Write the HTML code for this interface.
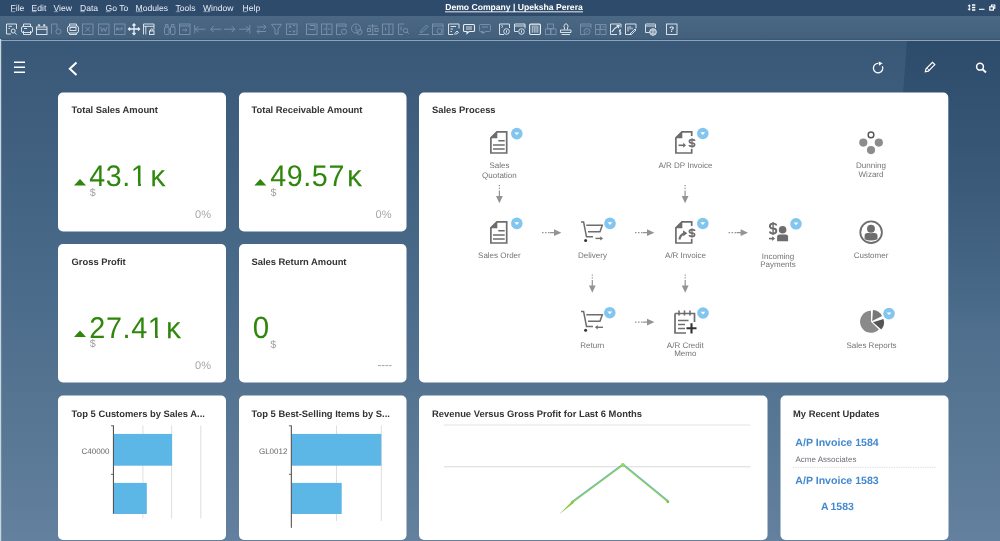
<!DOCTYPE html>
<html><head><meta charset="utf-8"><title>Cockpit</title>
<style>
*{margin:0;padding:0}
html,body{width:1000px;height:541px;overflow:hidden;background:#3a5979}
svg{display:block;font-family:"Liberation Sans", sans-serif;will-change:transform;text-rendering:geometricPrecision}
</style></head><body>
<svg width="1000" height="541" viewBox="0 0 1000 541">
<defs>
<linearGradient id="bg" x1="0" y1="0" x2="0" y2="1">
<stop offset="0" stop-color="#395878"/><stop offset="0.5" stop-color="#4b6b8a"/><stop offset="1" stop-color="#63819e"/>
</linearGradient>
<linearGradient id="facet" x1="0" y1="0" x2="0" y2="1">
<stop offset="0" stop-color="#1f3b5c" stop-opacity="0.45"/><stop offset="1" stop-color="#1f3b5c" stop-opacity="0"/>
</linearGradient>
</defs>

<rect x="0" y="0" width="1000" height="16" fill="#2e4b6b"/>
<text x="10.5" y="10.8" font-size="8.6" fill="#e6ecf2" font-weight="normal" text-anchor="start" >File</text>
<rect x="10.8" y="11.5" width="4.5" height="0.6" fill="#c9d3dd"/>
<text x="31.5" y="10.8" font-size="8.6" fill="#e6ecf2" font-weight="normal" text-anchor="start" >Edit</text>
<rect x="31.8" y="11.5" width="4.5" height="0.6" fill="#c9d3dd"/>
<text x="53.5" y="10.8" font-size="8.6" fill="#e6ecf2" font-weight="normal" text-anchor="start" >View</text>
<rect x="53.8" y="11.5" width="4.5" height="0.6" fill="#c9d3dd"/>
<text x="80" y="10.8" font-size="8.6" fill="#e6ecf2" font-weight="normal" text-anchor="start" >Data</text>
<rect x="80.3" y="11.5" width="4.5" height="0.6" fill="#c9d3dd"/>
<text x="105.5" y="10.8" font-size="8.6" fill="#e6ecf2" font-weight="normal" text-anchor="start" >Go To</text>
<rect x="105.8" y="11.5" width="4.5" height="0.6" fill="#c9d3dd"/>
<text x="135.5" y="10.8" font-size="8.6" fill="#e6ecf2" font-weight="normal" text-anchor="start" >Modules</text>
<rect x="135.8" y="11.5" width="7" height="0.6" fill="#c9d3dd"/>
<text x="175.5" y="10.8" font-size="8.6" fill="#e6ecf2" font-weight="normal" text-anchor="start" >Tools</text>
<rect x="175.8" y="11.5" width="4.5" height="0.6" fill="#c9d3dd"/>
<text x="203" y="10.8" font-size="8.6" fill="#e6ecf2" font-weight="normal" text-anchor="start" >Window</text>
<rect x="203.3" y="11.5" width="7" height="0.6" fill="#c9d3dd"/>
<text x="242.5" y="10.8" font-size="8.6" fill="#e6ecf2" font-weight="normal" text-anchor="start" >Help</text>
<rect x="242.8" y="11.5" width="4.5" height="0.6" fill="#c9d3dd"/>
<text x="514" y="10.2" font-size="8.6" fill="#ffffff" font-weight="bold" text-anchor="middle" >Demo Company | Upeksha Perera</text>
<rect x="445" y="11.4" width="138" height="0.9" fill="#ffffff"/>
<g fill="none" stroke="#ffffff" stroke-width="1"><path d="M969.3 5V10" stroke-width="0.9"/><path d="M967.6 6.2L969.3 4.2L971 6.2ZM967.6 8.8L969.3 10.8L971 8.8Z" fill="#fff" stroke="none"/><path d="M972 5H975.3M972 7.5H975.3M972 10H975.3" stroke-width="1.3"/><path d="M979 9.3H984.5" stroke-width="1.1"/><rect x="989.8" y="6.8" width="3.6" height="3.3" stroke-width="1.2"/><path d="M991.5 6.5V5H994.8V8.3H993.5" stroke-width="1.1"/></g>
<defs><linearGradient id="tbg" x1="0" y1="0" x2="0" y2="1"><stop offset="0" stop-color="#4a6784"/><stop offset="1" stop-color="#42607c"/></linearGradient></defs><rect x="0" y="16" width="1000" height="24" fill="url(#tbg)"/><rect x="0" y="38.8" width="1000" height="1.2" fill="#3b5773"/>
<g transform="translate(6,23.5)" fill="none" stroke="#e9eef3" stroke-width="0.9"><path d="M0.5 10.5V0.5H10.5V5.5M0.5 10.5H5"/><path d="M2.5 2.8H6M2.5 5H4"/><circle cx="7.2" cy="7.5" r="2"/><path d="M8.6 9L10.6 11"/></g>
<g transform="translate(21,23.5)" fill="none" stroke="#e9eef3" stroke-width="0.9"><rect x="0.5" y="3" width="11" height="6" rx="1.5"/><path d="M2.5 3V0.5H9.5V3M2.5 7.5V11H9.5V7.5"/><path d="M3 5H6"/></g>
<g transform="translate(36,23.5)" fill="none" stroke="#e9eef3" stroke-width="0.9"><rect x="0.5" y="3.5" width="10.5" height="7.5"/><path d="M0.5 5.8H11"/><path d="M3 0.5V3M1.8 1.7H4.2M8.2 0.5V3M7 1.7H9.5"/></g>
<g transform="translate(51,23.5)" fill="none" stroke="#7c93aa" stroke-width="0.9"><path d="M0.5 10.5V0.5H6V5"/><circle cx="7.5" cy="8" r="2.6"/></g>
<g transform="translate(67,23.5)" fill="none" stroke="#e9eef3" stroke-width="0.9"><rect x="0.5" y="2.5" width="11" height="7" rx="2"/><path d="M2.5 2.5V0.5H9.5V2.5M2.5 9.5V11H9.5V9.5"/><rect x="3" y="4" width="6" height="3"/></g>
<g transform="translate(82,23.5)" fill="none" stroke="#7c93aa" stroke-width="0.9"><rect x="0.5" y="0.5" width="10.5" height="10.5"/><path d="M3.5 3.5L8 8M8 3.5L3.5 8"/></g>
<g transform="translate(98,23.5)" fill="none" stroke="#7c93aa" stroke-width="0.9"><rect x="0.5" y="0.5" width="10.5" height="10.5"/><path d="M2.5 3.5L4 8L5.7 4.5L7.4 8L9 3.5"/></g>
<g transform="translate(114,23.5)" fill="none" stroke="#7c93aa" stroke-width="0.9"><rect x="0.5" y="0.5" width="10.5" height="10.5"/><path d="M2.5 7V4.5H4V6H2.5M5 4.5V7M7 4.5V7M7 4.5H9M7 5.7H8.5"/></g>
<g transform="translate(128,23.5)" fill="none" stroke="#e9eef3" stroke-width="0.9"><path d="M6 0.5V11M0.5 5.5H11.5M4.5 2L6 0.5L7.5 2M4.5 9.5L6 11L7.5 9.5M2 4L0.5 5.5L2 7M10 4L11.5 5.5L10 7" stroke-width="1.3"/></g>
<g transform="translate(143,23.5)" fill="none" stroke="#e9eef3" stroke-width="0.9"><path d="M0.5 11V0.5H11V6"/><path d="M0.5 2.8H11M2.8 2.8V11"/><rect x="6.5" y="7.5" width="4.5" height="3.5"/><path d="M7.5 7.5V6.5A1.2 1.2 0 0 1 10 6.5V7.5"/></g>
<g transform="translate(164,23.5)" fill="none" stroke="#7c93aa" stroke-width="0.9"><rect x="0.5" y="3.5" width="4.5" height="7.5" rx="1"/><rect x="6.5" y="3.5" width="4.5" height="7.5" rx="1"/><path d="M1.5 3.5V1H4V3.5M7.5 3.5V1H10V3.5M5 6H6.5"/></g>
<g transform="translate(179,23.5)" fill="none" stroke="#7c93aa" stroke-width="0.9"><rect x="0.5" y="0.5" width="10.5" height="10.5"/><path d="M0.5 2.5H11M3 6.5H8M6.5 5L8 6.5L6.5 8"/></g>
<g transform="translate(194,23.5)" fill="none" stroke="#7c93aa" stroke-width="0.9"><path d="M0.7 1.5V10M1.5 5.7H11.5M4.5 2.7L1.5 5.7L4.5 8.7"/></g>
<g transform="translate(210,23.5)" fill="none" stroke="#7c93aa" stroke-width="0.9"><path d="M0.7 5.7H11.5M3.7 2.7L0.7 5.7L3.7 8.7"/></g>
<g transform="translate(224,23.5)" fill="none" stroke="#7c93aa" stroke-width="0.9"><path d="M0 5.7H10.8M7.8 2.7L10.8 5.7L7.8 8.7"/></g>
<g transform="translate(239,23.5)" fill="none" stroke="#7c93aa" stroke-width="0.9"><path d="M10.8 1.5V10M0 5.7H10M7 2.7L10 5.7L7 8.7"/></g>
<g transform="translate(256,23.5)" fill="none" stroke="#7c93aa" stroke-width="0.9"><path d="M1 3.5H10M7.5 1L10 3.5L7.5 6M10 8H1M3.5 5.5L1 8L3.5 10.5"/></g>
<g transform="translate(271,23.5)" fill="none" stroke="#7c93aa" stroke-width="0.9"><path d="M0.5 0.8H10.5L7 5.5V10.5H4V5.5Z"/></g>
<g transform="translate(286,23.5)" fill="none" stroke="#7c93aa" stroke-width="0.9"><rect x="0.5" y="0.5" width="10.5" height="10.5"/><path d="M3 4.5L4 2L5 4.5M7 2H9M3 8H5M7 7L8 9L9 7"/></g>
<g transform="translate(306,23.5)" fill="none" stroke="#7c93aa" stroke-width="0.9"><rect x="0.5" y="0.5" width="10.5" height="10.5"/><path d="M0.5 0.5V11M4 2H9V6H4M2 5.5H4"/></g>
<g transform="translate(321,23.5)" fill="none" stroke="#7c93aa" stroke-width="0.9"><rect x="0.5" y="0.5" width="10.5" height="10.5"/><path d="M5.7 0.5V11M2.5 5.5H5M7 5.5H9.5"/></g>
<g transform="translate(336,23.5)" fill="none" stroke="#7c93aa" stroke-width="0.9"><path d="M0.5 11V0.5H10V4M0.5 2.5H10M0.5 11H5"/><circle cx="8" cy="8.2" r="2.6"/></g>
<g transform="translate(351,23.5)" fill="none" stroke="#7c93aa" stroke-width="0.9"><circle cx="5" cy="5" r="4.5"/><circle cx="8.5" cy="8.5" r="2.5"/><path d="M5 2.5V7.5"/></g>
<g transform="translate(367,23.5)" fill="none" stroke="#7c93aa" stroke-width="0.9"><path d="M5.7 0.5V11M0.5 11H11M1 2.5H10.5"/><rect x="0.5" y="5" width="3" height="3"/><rect x="8" y="5" width="3" height="3"/></g>
<g transform="translate(382,23.5)" fill="none" stroke="#7c93aa" stroke-width="0.9"><rect x="0.5" y="0.5" width="10.5" height="10.5"/><path d="M7 0.5V11M3.5 4V7"/></g>
<g transform="translate(398,23.5)" fill="none" stroke="#7c93aa" stroke-width="0.9"><path d="M0.5 11V0.5H6M0.5 11H5"/><path d="M3 3V7"/><circle cx="7.5" cy="7" r="2.2"/><path d="M9 8.5L11 10.5"/></g>
<g transform="translate(418,23.5)" fill="none" stroke="#7c93aa" stroke-width="0.9"><path d="M0.5 11H11M2.5 9L3 7L8.5 1.5L10 3L4.5 8.5Z"/></g>
<g transform="translate(432,23.5)" fill="none" stroke="#7c93aa" stroke-width="0.9"><rect x="0.5" y="0.5" width="10.5" height="10.5"/><path d="M0.5 2.5H11"/><circle cx="7.5" cy="7.5" r="2.5"/></g>
<g transform="translate(448,23.5)" fill="none" stroke="#e9eef3" stroke-width="0.9"><path d="M0.5 11V0.5H11V5M0.5 11H5"/><path d="M2.5 3H8M2.5 5.5H5M2.5 8H4"/><path d="M6 11L9 7.5L10.5 9L7.5 11"/></g>
<g transform="translate(463,23.5)" fill="none" stroke="#e9eef3" stroke-width="0.9"><path d="M1.5 1H10.5Q11.5 1 11.5 2V7Q11.5 8 10.5 8H6L4 10V8H1.5Q0.5 8 0.5 7V2Q0.5 1 1.5 1Z" stroke-width="1.1"/><path d="M3 3.5H9M3 5.5H9"/></g>
<g transform="translate(479,23.5)" fill="none" stroke="#7c93aa" stroke-width="0.9"><path d="M1.5 1H10.5Q11.5 1 11.5 2V7Q11.5 8 10.5 8H6L4 10V8H1.5Q0.5 8 0.5 7V2Q0.5 1 1.5 1Z"/><path d="M3 3.5H9M2 9H6"/></g>
<g transform="translate(499,23.5)" fill="none" stroke="#e9eef3" stroke-width="0.9"><path d="M0.5 11V0.5H10.5V4.5M0.5 11H5"/><path d="M2.5 2.5L3.5 1.5M2.5 4L4 3"/><circle cx="7.5" cy="8" r="2.8"/><path d="M7.5 6.8V9.2"/></g>
<g transform="translate(514,23.5)" fill="none" stroke="#e9eef3" stroke-width="0.9"><path d="M0.5 8V0.5H11V5M0.5 8H4M0.5 2.5H11"/><circle cx="7.5" cy="8" r="2.8"/><path d="M7.5 6.8V9.2"/></g>
<g transform="translate(529,23.5)" fill="none" stroke="#e9eef3" stroke-width="0.9"><rect x="0.6" y="0.6" width="10.8" height="10.4" rx="1.2" stroke-width="1.2"/><path d="M2.5 2.6H9.5M3.3 3.5V9.3M5.2 3.5V9.3M7 3.5V9.3M8.8 3.5V9.3" stroke-width="0.8"/></g>
<g transform="translate(545,23.5)" fill="none" stroke="#7c93aa" stroke-width="0.9"><rect x="2.5" y="0.5" width="6" height="4.5"/><rect x="0.5" y="5.5" width="5" height="5.5"/><rect x="6" y="5.5" width="5" height="5.5"/></g>
<g transform="translate(560,23.5)" fill="none" stroke="#e9eef3" stroke-width="0.9"><path d="M4.5 6V4.5A2 2.5 0 1 1 7.5 4.5V6M0.5 6.5H11V9H0.5ZM1.5 11H10"/></g>
<g transform="translate(580,23.5)" fill="none" stroke="#7c93aa" stroke-width="0.9"><path d="M0.5 11V0.5H11V5M0.5 2.5H11M0.5 11H5"/><circle cx="7" cy="8" r="3"/><path d="M6 9L8 7"/></g>
<g transform="translate(595,23.5)" fill="none" stroke="#7c93aa" stroke-width="0.9"><path d="M0.5 11V1H5V11H0.5M0.5 6H11V11H5.7M5.7 6V1H11V6M7.5 3.5H10"/></g>
<g transform="translate(610,23.5)" fill="none" stroke="#e9eef3" stroke-width="0.9"><path d="M11 4V0.5H0.5V11H7"/><path d="M2 8.5Q4 4.5 8.5 2.5" stroke-width="1.3"/><path d="M6.5 1.8L9.2 2.2L8.3 4.6" stroke-width="1.1"/><path d="M11 6.5Q9.2 6.2 9.2 7.5Q9.2 8.3 10.2 8.6Q11.3 9 11 10.2Q10.6 11 9.2 10.6M10.1 5.8V11.5" stroke-width="0.9"/></g>
<g transform="translate(625,23.5)" fill="none" stroke="#e9eef3" stroke-width="0.9"><path d="M0.5 11V0.5H11V5M0.5 11H6"/><path d="M3 3V8M5 2.5V6M7 4V6"/><path d="M5 10.5L10 5.5L11 6.5L6.2 11.2Z"/></g>
<g transform="translate(645,23.5)" fill="none" stroke="#e9eef3" stroke-width="0.9"><path d="M0.5 9V1Q0.5 0.5 1 0.5H10Q10.5 0.5 10.5 1V4.5M0.5 9H4.5M0.5 2.5H10.5"/><circle cx="8" cy="8.5" r="3.3" fill="#47627f" stroke-width="1"/><path d="M4.7 8.5H11.3M8 5.2V11.8M5.5 6.8H10.5M5.5 10.2H10.5" stroke-width="0.7"/></g>
<g transform="translate(666,23.5)" fill="none" stroke="#e9eef3" stroke-width="0.9"><rect x="0.5" y="0.5" width="10.5" height="10.5"/><text x="5.75" y="8.6" text-anchor="middle" font-family='"Liberation Sans", sans-serif' font-size="8" font-weight="bold" fill="#e9eef3" stroke="none">?</text></g>
<rect x="0" y="40" width="1000" height="1" fill="#8da4b9"/>
<rect x="0" y="41" width="1000" height="500" fill="url(#bg)"/>
<polygon points="907,41 1000,41 1000,330 885,330" fill="url(#facet)"/>
<rect x="0" y="39" width="1.2" height="502" fill="#c8d4de"/>
<g stroke="#ffffff" fill="none" stroke-width="1.6"><path d="M14 62.2H25M14 67.2H25M14 72.2H25"/></g>
<path d="M76.5 62.5L69.8 68.8L76.5 75" stroke="#ffffff" stroke-width="2" fill="none"/>
<path d="M878.3 63.4A4.7 4.7 0 1 0 882.4 66.2" stroke="#ffffff" stroke-width="1.3" fill="none"/><path d="M878.6 61.4L882.6 63.2L879 65.8Z" fill="#ffffff"/>
<path d="M925.3 71.8L926 68.8L932.5 62.3L934.8 64.6L928.3 71.1Z" stroke="#ffffff" stroke-width="1.2" fill="none"/><path d="M927 68.2L929.6 70.5" stroke="#ffffff" stroke-width="0.8"/>
<circle cx="980" cy="66.7" r="3.4" stroke="#ffffff" stroke-width="1.5" fill="none"/><path d="M982.5 69.2L986 72.5" stroke="#ffffff" stroke-width="1.9"/>
<rect x="58" y="92.5" width="168" height="139" rx="5" fill="#ffffff"/>
<rect x="239" y="92.5" width="167.5" height="139" rx="5" fill="#ffffff"/>
<rect x="58" y="244" width="168" height="138.5" rx="5" fill="#ffffff"/>
<rect x="239" y="244" width="167.5" height="138.5" rx="5" fill="#ffffff"/>
<rect x="419" y="92.5" width="529.3" height="290" rx="5" fill="#ffffff"/>
<rect x="58" y="395.5" width="168" height="144.5" rx="5" fill="#ffffff"/>
<rect x="239" y="395.5" width="167.5" height="144.5" rx="5" fill="#ffffff"/>
<rect x="419" y="395.5" width="348.5" height="144.5" rx="5" fill="#ffffff"/>
<rect x="780.5" y="395.5" width="168" height="144.5" rx="5" fill="#ffffff"/>
<text x="71.5" y="113" font-size="9.4" fill="#333333" font-weight="bold" text-anchor="start" >Total Sales Amount</text>
<text x="251.5" y="113" font-size="9.4" fill="#333333" font-weight="bold" text-anchor="start" >Total Receivable Amount</text>
<text x="71.5" y="264.5" font-size="9.4" fill="#333333" font-weight="bold" text-anchor="start" >Gross Profit</text>
<text x="251.5" y="264.5" font-size="9.4" fill="#333333" font-weight="bold" text-anchor="start" >Sales Return Amount</text>
<text x="432" y="113" font-size="9.4" fill="#333333" font-weight="bold" text-anchor="start" >Sales Process</text>
<text x="71.5" y="416.5" font-size="9.4" fill="#333333" font-weight="bold" text-anchor="start" >Top 5 Customers by Sales A...</text>
<text x="251.5" y="416.5" font-size="9.4" fill="#333333" font-weight="bold" text-anchor="start" >Top 5 Best-Selling Items by S...</text>
<text x="432" y="416.5" font-size="9.4" fill="#333333" font-weight="bold" text-anchor="start" >Revenue Versus Gross Profit for Last 6 Months</text>
<text x="793" y="416.5" font-size="9.4" fill="#333333" font-weight="bold" text-anchor="start" >My Recent Updates</text>
<g transform="translate(0,185.9) scale(1,1.04) translate(0,-185.9)"><text x="89.3" y="185.9" font-size="28.6" fill="#2e870c" font-weight="normal" text-anchor="start" letter-spacing="0.6">43.1</text></g>
<g transform="translate(0,185.9) scale(1,1.04) translate(0,-185.9)"><text x="151" y="185.9" font-size="21.5" fill="#2e870c" font-weight="normal" text-anchor="start" stroke="#2e870c" stroke-width="0.5">K</text></g>
<polygon points="74,185.5 86,185.5 80,179" fill="#2e870c"/>
<text x="89.8" y="195.5" font-size="10.8" fill="#a0a0a0" font-weight="normal" text-anchor="start" >$</text>
<text x="211" y="218" font-size="11" fill="#a8a8a8" font-weight="normal" text-anchor="end" >0%</text>
<rect x="132.3" y="182.4" width="5.8" height="4" fill="#fff"/><rect x="140.9" y="182.4" width="5.5" height="4" fill="#fff"/>
<g transform="translate(0,185.9) scale(1,1.04) translate(0,-185.9)"><text x="270.2" y="185.9" font-size="28.7" fill="#2e870c" font-weight="normal" text-anchor="start" letter-spacing="0.6">49.57</text></g>
<g transform="translate(0,185.9) scale(1,1.04) translate(0,-185.9)"><text x="347.6" y="185.9" font-size="21.5" fill="#2e870c" font-weight="normal" text-anchor="start" stroke="#2e870c" stroke-width="0.5">K</text></g>
<polygon points="254.3,185.5 266.3,185.5 260.3,179" fill="#2e870c"/>
<text x="270.6" y="195.5" font-size="10.8" fill="#a0a0a0" font-weight="normal" text-anchor="start" >$</text>
<text x="391.5" y="218" font-size="11" fill="#a8a8a8" font-weight="normal" text-anchor="end" >0%</text>
<g transform="translate(0,337.7) scale(1,1.04) translate(0,-337.7)"><text x="89.3" y="337.7" font-size="28.8" fill="#2e870c" font-weight="normal" text-anchor="start" letter-spacing="0.6">27.41</text></g>
<g transform="translate(0,337.7) scale(1,1.04) translate(0,-337.7)"><text x="166.6" y="337.7" font-size="21.5" fill="#2e870c" font-weight="normal" text-anchor="start" stroke="#2e870c" stroke-width="0.5">K</text></g>
<polygon points="74,337 86,337 80,330.5" fill="#2e870c"/>
<text x="89.8" y="347" font-size="10.8" fill="#a0a0a0" font-weight="normal" text-anchor="start" >$</text>
<text x="211" y="369" font-size="11" fill="#a8a8a8" font-weight="normal" text-anchor="end" >0%</text>
<rect x="149.3" y="334.4" width="5.8" height="4" fill="#fff"/><rect x="157.9" y="334.4" width="5.5" height="4" fill="#fff"/>
<g transform="translate(0,338) scale(1,1.04) translate(0,-338)"><text x="252.8" y="338" font-size="29.5" fill="#2e870c" font-weight="normal" text-anchor="start" letter-spacing="0.6">0</text></g>
<text x="270.3" y="347.8" font-size="10.8" fill="#a0a0a0" font-weight="normal" text-anchor="start" >$</text>
<path d="M378 365.6H380.8M381.7 365.6H384.5M385.4 365.6H388.2M389.1 365.6H391.6" stroke="#999" stroke-width="0.9"/>
<g transform="translate(490,131)"><path d="M0.9 6.9L7 0.9H16.7V22H0.9Z" fill="none" stroke="#6d6d6d" stroke-width="1.7" stroke-linejoin="miter"/><path d="M0.1 7.2L7.3 0.1V7.2Z" fill="#6d6d6d"/><path d="M8.3 9.7H14.7M3 14H14.7M3 18H14.7" stroke="#6d6d6d" stroke-width="1.4"/></g>
<circle cx="516.8" cy="133.6" r="5.8" fill="#82c6f0"/><polygon points="514.4,132.4 519.1999999999999,132.4 516.8,135.1" fill="#ffffff"/>
<text x="499.4" y="168.2" font-size="8" fill="#747474" font-weight="normal" text-anchor="middle" >Sales</text>
<text x="499.4" y="177.5" font-size="8" fill="#747474" font-weight="normal" text-anchor="middle" >Quotation</text>
<g transform="translate(490,221)"><path d="M0.9 6.9L7 0.9H16.7V22H0.9Z" fill="none" stroke="#6d6d6d" stroke-width="1.7" stroke-linejoin="miter"/><path d="M0.1 7.2L7.3 0.1V7.2Z" fill="#6d6d6d"/><path d="M8.3 9.7H14.7M3 14H14.7M3 18H14.7" stroke="#6d6d6d" stroke-width="1.4"/></g>
<circle cx="516.8" cy="223.4" r="5.8" fill="#82c6f0"/><polygon points="514.4,222.20000000000002 519.1999999999999,222.20000000000002 516.8,224.9" fill="#ffffff"/>
<text x="499.4" y="257.9" font-size="8" fill="#747474" font-weight="normal" text-anchor="middle" >Sales Order</text>
<g transform="translate(581,221.4)"><path d="M0 0.6H2.6L5.5 15.4H12" fill="none" stroke="#6d6d6d" stroke-width="1.5"/><path d="M5.3 3.8H21.3L19 10.3H7" fill="none" stroke="#6d6d6d" stroke-width="1.5"/><circle cx="4.6" cy="19.2" r="1.5" fill="#333"/><path d="M14.5 17H20" stroke="#6d6d6d" stroke-width="1.4"/><path d="M19.3 14.8L22 17L19.3 19.2Z" fill="#6d6d6d"/></g>
<circle cx="610" cy="223.4" r="5.8" fill="#82c6f0"/><polygon points="607.6,222.20000000000002 612.4,222.20000000000002 610,224.9" fill="#ffffff"/>
<text x="592.5" y="257.9" font-size="8" fill="#747474" font-weight="normal" text-anchor="middle" >Delivery</text>
<g transform="translate(675,131)"><path d="M16.7 5V0.9H7L0.9 6.9V22H16.7V17.8" fill="none" stroke="#6d6d6d" stroke-width="1.7"/><path d="M0.1 7.2L7.3 0.1V7.2Z" fill="#6d6d6d"/><path d="M19.60,9.96 Q19.60,8.60 17.00,8.60 Q14.40,8.60 14.40,10.30 Q14.40,12.00 17.00,12.00 Q19.60,12.00 19.60,13.70 Q19.60,15.40 17.00,15.40 Q14.40,15.40 14.40,14.04" fill="none" stroke="#6d6d6d" stroke-width="1.7"/><path d="M17.00,7.44V16.56" stroke="#6d6d6d" stroke-width="1.27"/><path d="M3.5 14.3H9.2" stroke="#6d6d6d" stroke-width="1.6"/><path d="M8.2 11.8L11 14.3L8.2 16.8Z" fill="#6d6d6d"/></g>
<circle cx="702.8" cy="133.5" r="5.8" fill="#82c6f0"/><polygon points="700.4,132.3 705.1999999999999,132.3 702.8,135.0" fill="#ffffff"/>
<text x="685.5" y="168.2" font-size="8" fill="#747474" font-weight="normal" text-anchor="middle" >A/R DP Invoice</text>
<g transform="translate(675,221)"><path d="M16.7 5V0.9H7L0.9 6.9V22H16.7V17.8" fill="none" stroke="#6d6d6d" stroke-width="1.7"/><path d="M0.1 7.2L7.3 0.1V7.2Z" fill="#6d6d6d"/><path d="M19.60,9.96 Q19.60,8.60 17.00,8.60 Q14.40,8.60 14.40,10.30 Q14.40,12.00 17.00,12.00 Q19.60,12.00 19.60,13.70 Q19.60,15.40 17.00,15.40 Q14.40,15.40 14.40,14.04" fill="none" stroke="#6d6d6d" stroke-width="1.7"/><path d="M17.00,7.44V16.56" stroke="#6d6d6d" stroke-width="1.27"/><path d="M4.4 18.5Q5 13.8 9.3 12.4" fill="none" stroke="#6d6d6d" stroke-width="2.1"/><path d="M8 9.3L12.3 12.2L8.3 15.3Z" fill="#6d6d6d"/></g>
<circle cx="702.8" cy="223.5" r="5.8" fill="#82c6f0"/><polygon points="700.4,222.3 705.1999999999999,222.3 702.8,225.0" fill="#ffffff"/>
<text x="685.5" y="257.9" font-size="8" fill="#747474" font-weight="normal" text-anchor="middle" >A/R Invoice</text>
<path d="M776.30,225.56 Q776.30,223.60 773.10,223.60 Q769.90,223.60 769.90,226.05 Q769.90,228.50 773.10,228.50 Q776.30,228.50 776.30,230.95 Q776.30,233.40 773.10,233.40 Q769.90,233.40 769.90,231.44" fill="none" stroke="#6d6d6d" stroke-width="1.9"/><path d="M773.10,221.93V235.07" stroke="#6d6d6d" stroke-width="1.42"/>
<path d="M777.1 241.2V236.6Q777.1 234.4 779.5 234.4H785.7Q788.1 234.4 788.1 236.6V241.2Z" fill="#6d6d6d"/><circle cx="782.6" cy="229.8" r="4.3" fill="#ffffff"/><circle cx="782.6" cy="229.8" r="3.8" fill="#6d6d6d"/>
<path d="M769 238.6H773" stroke="#6d6d6d" stroke-width="1.6"/><path d="M772.2 236.2L775 238.6L772.2 241Z" fill="#6d6d6d"/>
<circle cx="796" cy="223.8" r="5.8" fill="#82c6f0"/><polygon points="793.6,222.60000000000002 798.4,222.60000000000002 796,225.3" fill="#ffffff"/>
<text x="778" y="258.5" font-size="8" fill="#747474" font-weight="normal" text-anchor="middle" >Incoming</text>
<text x="778" y="267.3" font-size="8" fill="#747474" font-weight="normal" text-anchor="middle" >Payments</text>
<circle cx="871" cy="134.9" r="2.85" fill="none" stroke="#555" stroke-width="1.45"/>
<circle cx="863.3" cy="142.6" r="4.1" fill="#8c8c8c"/><circle cx="878.8" cy="142.6" r="4.1" fill="#8c8c8c"/><circle cx="871" cy="150.1" r="4.1" fill="#8c8c8c"/>
<text x="871" y="168.4" font-size="8" fill="#747474" font-weight="normal" text-anchor="middle" >Dunning</text>
<text x="871" y="177.4" font-size="8" fill="#747474" font-weight="normal" text-anchor="middle" >Wizard</text>
<circle cx="871.1" cy="232.2" r="10.8" fill="none" stroke="#6d6d6d" stroke-width="1.8"/>
<path d="M864.6 239.3V236Q864.6 233 867.5 233H874.5Q877.5 233 877.5 236V239.3Q874 240.5 871 240.5Q867.5 240.5 864.6 239.3Z" fill="#6d6d6d"/><circle cx="871" cy="228.8" r="4.5" fill="#fff"/><circle cx="871" cy="228.8" r="3.95" fill="#6d6d6d"/>
<text x="871" y="257.9" font-size="8" fill="#747474" font-weight="normal" text-anchor="middle" >Customer</text>
<g transform="translate(581,311)"><path d="M0 0.6H2.6L5.5 15.4H12" fill="none" stroke="#6d6d6d" stroke-width="1.5"/><path d="M5.3 3.8H21.3L19 10.3H7" fill="none" stroke="#6d6d6d" stroke-width="1.5"/><circle cx="4.6" cy="19.2" r="1.5" fill="#333"/><path d="M16 16.3H22" stroke="#6d6d6d" stroke-width="1.4"/><path d="M16.7 14.1L14 16.3L16.7 18.5Z" fill="#6d6d6d"/></g>
<circle cx="609.8" cy="312.7" r="5.8" fill="#82c6f0"/><polygon points="607.4,311.5 612.1999999999999,311.5 609.8,314.2" fill="#ffffff"/>
<text x="592.3" y="348.4" font-size="8" fill="#747474" font-weight="normal" text-anchor="middle" >Return</text>
<g transform="translate(674,310)"><path d="M1 3.5H20.5V12M1 3.5V23H12" fill="none" stroke="#6d6d6d" stroke-width="1.7"/><path d="M5 0.5V5.5M10.5 0.5V5.5M16 0.5V5.5" stroke="#6d6d6d" stroke-width="1.6"/><path d="M4 10.5H14.5M4 14.5H11M4 18.5H11" stroke="#6d6d6d" stroke-width="1.6"/><path d="M12.5 18.3H22.5M17.5 13.3V23.5" stroke="#333" stroke-width="2.1"/></g>
<circle cx="703" cy="313" r="5.8" fill="#82c6f0"/><polygon points="700.6,311.8 705.4,311.8 703,314.5" fill="#ffffff"/>
<text x="685.3" y="348.0" font-size="8" fill="#747474" font-weight="normal" text-anchor="middle" >A/R Credit</text>
<text x="685.3" y="356.4" font-size="8" fill="#747474" font-weight="normal" text-anchor="middle" >Memo</text>
<path d="M871,321.8 L878.91,329.44 A11,11 0 1 1 871.00,310.80 Z" fill="#8a8a8a"/>
<path d="M872.2,320.90000000000003 L872.97,309.93 A11,11 0 0 1 882.09,316.08 Z" fill="#777777"/>
<path d="M873.0,322.2 L883.52,318.98 A11,11 0 0 1 881.30,329.42 Z" fill="#555555"/>
<circle cx="889" cy="313.6" r="5.8" fill="#82c6f0"/><polygon points="886.6,312.40000000000003 891.4,312.40000000000003 889,315.1" fill="#ffffff"/>
<text x="871.5" y="348.3" font-size="8" fill="#747474" font-weight="normal" text-anchor="middle" >Sales Reports</text>
<path d="M499.4 185V186.3M499.4 187.8V189.1M499.4 190.4V196.5" stroke="#939393" stroke-width="1.2"/>
<polygon points="496.0,196 502.79999999999995,196 499.4,203.3" fill="#939393"/>
<path d="M685.1 185V186.3M685.1 187.8V189.1M685.1 190.4V196.5" stroke="#939393" stroke-width="1.2"/>
<polygon points="681.7,196 688.5,196 685.1,203.3" fill="#939393"/>
<path d="M592.3 274.5V275.8M592.3 277.3V278.6M592.3 279.9V286.0" stroke="#939393" stroke-width="1.2"/>
<polygon points="588.9,285.5 595.6999999999999,285.5 592.3,292.8" fill="#939393"/>
<path d="M685.2 274.5V275.8M685.2 277.3V278.6M685.2 279.9V286.0" stroke="#939393" stroke-width="1.2"/>
<polygon points="681.8000000000001,285.5 688.6,285.5 685.2,292.8" fill="#939393"/>
<path d="M542 232.7H543.5M545 232.7H546.5M548 232.7H549.5M550 232.7H554.5" stroke="#939393" stroke-width="1.2"/>
<polygon points="554,229.29999999999998 554,236.1 561.4,232.7" fill="#939393"/>
<path d="M635 232.7H636.5M638 232.7H639.5M641 232.7H642.5M643 232.7H647.5" stroke="#939393" stroke-width="1.2"/>
<polygon points="647,229.29999999999998 647,236.1 654.4,232.7" fill="#939393"/>
<path d="M728.6 232.7H730.1M731.6 232.7H733.1M734.6 232.7H736.1M736.6 232.7H741.1" stroke="#939393" stroke-width="1.2"/>
<polygon points="740.6,229.29999999999998 740.6,236.1 748.0,232.7" fill="#939393"/>
<path d="M635 322.1H636.5M638 322.1H639.5M641 322.1H642.5M643 322.1H647.5" stroke="#939393" stroke-width="1.2"/>
<polygon points="647,318.70000000000005 647,325.5 654.4,322.1" fill="#939393"/>
<rect x="142.4" y="425.5" width="1" height="93.10000000000002" fill="#dedede"/>
<rect x="171.1" y="425.5" width="1" height="93.10000000000002" fill="#dedede"/>
<rect x="200.3" y="425.5" width="1" height="93.10000000000002" fill="#dedede"/>
<rect x="113.5" y="433.9" width="58.599999999999994" height="31.8" fill="#5cb6e6"/>
<rect x="113.5" y="482.9" width="33.30000000000001" height="31.1" fill="#5cb6e6"/>
<rect x="112.9" y="425.5" width="1.1" height="88.29999999999995" fill="#555"/>
<path d="M111.0 425.8H113.5 M111.0 474.3H113.5" stroke="#555" stroke-width="0.9"/>
<text x="109.5" y="453.5" font-size="8" fill="#666666" font-weight="normal" text-anchor="end" >C40000</text>
<rect x="336.0" y="425.5" width="1" height="95.5" fill="#dedede"/>
<rect x="380.8" y="425.5" width="1" height="95.5" fill="#dedede"/>
<rect x="291.4" y="433.9" width="89.90000000000003" height="31.8" fill="#5cb6e6"/>
<rect x="291.4" y="482.9" width="50.30000000000001" height="31.1" fill="#5cb6e6"/>
<rect x="290.79999999999995" y="425.5" width="1.1" height="102.29999999999995" fill="#555"/>
<path d="M288.9 425.8H291.4 M288.9 474.3H291.4" stroke="#555" stroke-width="0.9"/>
<text x="287.4" y="453.5" font-size="8" fill="#666666" font-weight="normal" text-anchor="end" >GL0012</text>
<rect x="443.8" y="424.5" width="306.7" height="1" fill="#e3e3e3"/>
<rect x="443.8" y="466.3" width="306.7" height="1" fill="#d9d9d9"/>
<path d="M573 502L623 465L668.2 502" stroke="#62b4e6" stroke-width="1.4" fill="none" transform="translate(0,-0.9)"/>
<path d="M573 502L623 465L668.2 502" stroke="#8fd24c" stroke-width="1.3" fill="none"/>
<polygon points="559,514.5 572.3,501 573.7,503" fill="#88c94a"/>
<circle cx="622.8" cy="465" r="1.9" fill="#9bd563"/><circle cx="572.5" cy="502" r="1.4" fill="#86c94c"/><circle cx="667.8" cy="501.8" r="1.4" fill="#7fbf45"/>
<text x="795.3" y="445.8" font-size="10.6" fill="#4389cf" font-weight="bold" text-anchor="start" >A/P Invoice 1584</text>
<text x="795.5" y="461.7" font-size="8" fill="#6e6e7a" font-weight="normal" text-anchor="start" >Acme Associates</text>
<path d="M793 467.3H936" stroke="#d0d0d0" stroke-width="0.8" stroke-dasharray="1.2,1.2"/>
<text x="795.3" y="483.5" font-size="10.6" fill="#4389cf" font-weight="bold" text-anchor="start" >A/P Invoice 1583</text>
<text x="821" y="509.5" font-size="10.5" fill="#4389cf" font-weight="bold" text-anchor="start" >A</text>
<text x="830.5" y="509.5" font-size="10.5" fill="#4389cf" font-weight="bold" text-anchor="start" >1583</text>
</svg></body></html>
